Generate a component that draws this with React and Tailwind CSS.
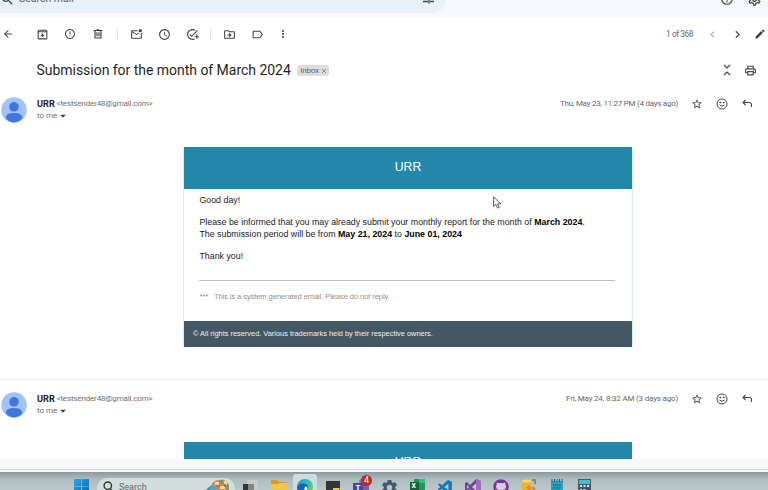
import React from 'react';
import {
  MdArrowBack, MdOutlineArchive, MdErrorOutline, MdOutlineMarkEmailUnread,
  MdAccessTime, MdOutlineAddTask, MdOutlineDriveFileMove, MdOutlineLabel, MdMoreVert,
  MdChevronLeft, MdChevronRight, MdEdit, MdOutlinePrint, MdStarBorder,
  MdSearch, MdHelpOutline, MdOutlineSettings, MdArrowDropDown, MdSettings,
} from 'react-icons/md';
import { VscVscode } from 'react-icons/vsc';
import { FaGithub } from 'react-icons/fa';

function Cell({ children, className = 'w-7' }) {
  return <div className={`flex shrink-0 items-center justify-center ${className}`}>{children}</div>;
}

function TuneIcon() {
  return (
    <svg width="13" height="12" viewBox="0 0 13 12" fill="none" stroke="currentColor" strokeWidth="1.3" className="mr-[11px] ml-auto">
      <path d="M6 4h6M1 4h3M4 2v4M1 8.500h5M8 8.500h4M7 6.500v4" />
    </svg>
  );
}

function TrashIcon() {
  return (
    <svg width="12" height="12" viewBox="0 0 24 24" fill="none" stroke="currentColor" strokeWidth="2.4">
      <path d="M3 5h18M9 3.500h6M6 5v15h12V5M10 8.500v8M14 8.500v8" />
    </svg>
  );
}

function CollapseIcon() {
  return (
    <svg width="8" height="12" viewBox="0 0 8 12" fill="none" stroke="currentColor" strokeWidth="1.2">
      <path d="m1 1 3 3 3-3M1 11l3-3 3 3" />
    </svg>
  );
}

function SmileIcon() {
  return (
    <svg width="12" height="12" viewBox="0 0 24 24" fill="none" stroke="currentColor" strokeWidth="2">
      <circle cx="12" cy="12" r="10" />
      <path d="M7 14q5 5 10 0" />
      <circle cx="8.500" cy="9" r="1" fill="currentColor" />
      <circle cx="15.500" cy="9" r="1" fill="currentColor" />
    </svg>
  );
}

function ReplyIcon() {
  return (
    <svg width="11" height="11" viewBox="0 0 22 22" fill="none" stroke="currentColor" strokeWidth="2.2">
      <path d="M7 4 2 9l5 5M2 9h13q4 0 4 4v5" />
    </svg>
  );
}

function TopBar() {
  return (
    <header className="h-[18px] shrink-0 overflow-hidden bg-[#f5f8fc]">
      <div className="-mt-[15px] flex h-7 items-center text-[#444746]">
        <div className="flex h-7 w-[446px] shrink-0 items-center rounded-r-[14px] bg-[#e9f1fb]">
          <MdSearch size={15} />
          <span className="ml-1 text-[10.5px] leading-none text-[#5f6368]">Search mail</span>
          <TuneIcon />
        </div>
        <MdHelpOutline size={14} className="ml-[274px]" />
        <MdOutlineSettings size={15} className="ml-[13px]" />
      </div>
    </header>
  );
}

function Toolbar() {
  return (
    <div className="flex h-8 shrink-0 items-center text-[#444546]">
      <Cell className="w-[15px]"><MdArrowBack size={12} /></Cell>
      <Cell className="ml-[13px] w-7"><MdOutlineArchive size={13} /></Cell>
      <Cell><MdErrorOutline size={12} /></Cell>
      <Cell><TrashIcon /></Cell>
      <div className="ml-[5px] h-[14px] w-px bg-[#e8e9ea]" />
      <Cell className="ml-1 w-7"><MdOutlineMarkEmailUnread size={13} /></Cell>
      <Cell><MdAccessTime size={13} /></Cell>
      <Cell><MdOutlineAddTask size={13} /></Cell>
      <div className="ml-1 h-[14px] w-px bg-[#e8e9ea]" />
      <Cell className="ml-1 w-7"><MdOutlineDriveFileMove size={13} /></Cell>
      <Cell><MdOutlineLabel size={13} /></Cell>
      <Cell className="w-6"><MdMoreVert size={12} /></Cell>
      <span className="ml-auto text-[8.2px] tracking-[-0.38px] whitespace-nowrap text-[#666]">1 of 368</span>
      <Cell className="ml-[7px] w-6"><MdChevronLeft size={13} className="text-[#aaa]" /></Cell>
      <Cell className="w-[26px]"><MdChevronRight size={15} /></Cell>
      <Cell className="-mr-px w-[19px]"><MdEdit size={12} /></Cell>
    </div>
  );
}

function Subject() {
  return (
    <div className="flex h-10 shrink-0 items-center pl-[36.5px] text-[#444546]">
      <h1 className="w-[255px] text-[14px] leading-none tracking-[-0.03px] whitespace-nowrap text-[#1f1f1f]">Submission for the month of March 2024</h1>
      <div className="ml-[5.5px] flex h-[11px] w-8 items-center justify-center gap-[3px] rounded-[3px] bg-[#dddddd] text-[8px] leading-none text-[#666]">
        <span className="pt-px tracking-[-0.2px]">Inbox</span>
        <svg width="4" height="4" viewBox="0 0 4 4" className="mt-px"><path d="m0 0 4 4M4 0 0 4" stroke="#666" strokeWidth="0.7" /></svg>
      </div>
      <Cell className="ml-auto w-[22px]"><CollapseIcon /></Cell>
      <Cell className="mr-[6px] w-6"><MdOutlinePrint size={13} /></Cell>
    </div>
  );
}

function Avatar() {
  return (
    <svg width="26" height="26" viewBox="0 0 26 26" className="ml-px shrink-0">
      <circle cx="13" cy="13" r="12.800" fill="#a0c3fb" />
      <circle cx="13" cy="9.800" r="4.800" fill="#4176dd" />
      <path d="M4.800 21q0-5 8.200-5t8.200 5q-3 4.400-8.200 4.400T4.800 21z" fill="#4176dd" />
    </svg>
  );
}

function MessageHead({ date, dateTracking }) {
  return (
    <div className="flex h-[26px] shrink-0 items-center">
      <Avatar />
      <div className="ml-[10px] flex h-[26px] flex-col text-[8px] text-[#707070]">
        <div className="flex h-[13px] items-center whitespace-nowrap">
          <b className="w-[19.5px] text-[9.2px] text-[#222]">URR</b>
          <span className="tracking-[-0.16px]">&lt;testsender48@gmail.com&gt;</span>
        </div>
        <div className="flex h-3 items-center">
          <span>to me</span>
          <MdArrowDropDown size={14} className="-ml-px text-[#444]" />
        </div>
      </div>
      <div className="mr-[7px] mb-auto ml-auto flex h-[13px] items-center text-[#444546]">
        <span className={`mr-[6px] text-[8px] whitespace-nowrap text-[#666] ${dateTracking}`}>{date}</span>
        <Cell className="w-[25px]"><MdStarBorder size={12} /></Cell>
        <Cell className="w-[25px]"><SmileIcon /></Cell>
        <Cell className="w-[27px]"><ReplyIcon /></Cell>
      </div>
    </div>
  );
}

function EmailBanner() {
  return (
    <div className="flex h-[42px] items-center justify-center bg-[#2387ac] pb-[2px] font-['Liberation_Sans',Arial,sans-serif] text-[12.2px] text-white">URR</div>
  );
}

function EmailCard() {
  return (
    <article className="ml-[183px] flex h-[200px] w-[450px] shrink-0 flex-col border-x border-[#d5efec] font-['Liberation_Sans',Arial,sans-serif] text-[#222]">
      <EmailBanner />
      <div className="flex h-[132px] flex-col px-[15.4px] text-[8.85px] leading-[12.5px] whitespace-nowrap">
        <p className="mt-[5px]">Good day!</p>
        <p className="mt-[9px]">
          Please be informed that you may already submit your monthly report for the month of <b className="text-black">March 2024</b>.<br />
          The submission period will be from <b className="text-black">May 21, 2024</b> to <b className="text-black">June 01, 2024</b>
        </p>
        <p className="mt-[9px]">Thank you!</p>
        <div className="mt-[18px] h-px w-[416px] bg-[#bbc1c1]" />
        <p className="mt-[10px] flex text-[7.5px] text-[#909090]">
          <span className="w-[14.5px]">***</span>
          <span className="tracking-[-0.07px]">This is a system generated email. Please do not reply.</span>
        </p>
      </div>
      <footer className="flex h-[26px] items-center bg-[#435863] pl-[9px] text-[7.4px] whitespace-nowrap text-[#edf1f3]">
        © All rights reserved. Various trademarks held by their respective owners.
      </footer>
    </article>
  );
}

function Cursor() {
  return (
    <svg width="9" height="13" viewBox="0 0 9 13" className="absolute top-[196px] left-[493px]">
      <path d="M.6.800v9.800l2.300-2.200 1.600 3.700 1.700-.8-1.600-3.500h3.100z" fill="#fff" stroke="#333" strokeWidth="0.800" />
    </svg>
  );
}

function StartIcon() {
  return (
    <svg width="15" height="15" viewBox="0 0 15 15">
      <defs>
        <linearGradient id="win" x2="1" y2="1"><stop stopColor="#2ba6df" /><stop offset="1" stopColor="#0867b9" /></linearGradient>
      </defs>
      <path d="M0 0h7.200v7.200H0zM7.800 0H15v7.200H7.800zM0 7.800h7.200V15H0zM7.800 7.800H15V15H7.800z" fill="url(#win)" />
    </svg>
  );
}

function TaskSearchIcon() {
  return (
    <svg width="10" height="12" viewBox="0 0 10 12" fill="none" stroke="#2e3538" strokeWidth="1.4" className="mt-[3px] ml-[6px]">
      <circle cx="4.800" cy="4.700" r="3.700" />
      <path d="m7.300 7.500 2.300 3" />
    </svg>
  );
}

function SearchArt() {
  return (
    <svg width="32" height="18" viewBox="0 0 32 18">
      <path d="M3 14q4-8 11-7l2 11H2z" fill="#2497be" />
      <path d="M8 9q5-3 9 2l-2 7H7z" fill="#48a9ca" />
      <path d="M9 7q3-5 8-5 6-2 10 5v11H16q2-8-7-11z" fill="#c28a60" />
      <path d="M13 4h4v3h-4zM22 3h3v4h-3zM18 8h5v3h-5z" fill="#efd6a4" />
      <path d="M18 2h3v4h-3zM24 7h3v4h-3z" fill="#799b5f" />
      <path d="M14 7h4v2h-4zM22 6h2v3h-2z" fill="#dc643b" />
      <path d="M1 12q5-3 7 6H1z" fill="#d6a97e" />
    </svg>
  );
}

function TaskViewIcon() {
  return (
    <svg width="16" height="16" viewBox="0 0 16 16"><path d="M4 0h11v12H4z" fill="#c9c8ca" /><path d="M0 4h11v10H0z" fill="#333436" /><path d="M5 4h6v6H5z" fill="#858486" /></svg>
  );
}

function FolderIcon() {
  return (
    <svg width="16" height="15" viewBox="0 0 16 15"><path d="M0 1h6l2 2h8v5H0z" fill="#d49b24" /><path d="M0 5h7l2-1h7v11H0z" fill="#f1c44b" /></svg>
  );
}

function EdgeIcon() {
  return (
    <svg width="16" height="16" viewBox="0 0 16 16">
      <defs>
        <linearGradient id="edge" x2="1" y2="0.600"><stop stopColor="#1992cd" /><stop offset="0.500" stopColor="#28b9c7" /><stop offset="1" stopColor="#68ce59" /></linearGradient>
      </defs>
      <circle cx="8" cy="8" r="8" fill="url(#edge)" />
      <path d="M0 9Q1 4 7 4.500q5 .5 3.500 5L8 9q-1 4 5 4-2 3-6 3-6-1-7-7z" fill="#1466b1" />
      <path d="M8 7.500q2-.5 2.500 2Q9 11 11 12q-5 1-3-4.500z" fill="#e5f3f8" />
    </svg>
  );
}

function NotesIcon() {
  return (
    <svg width="14" height="14" viewBox="0 0 14 14"><path d="M0 0h14v14H0z" fill="#343536" /><path d="M7 7h7l-5 7H7z" fill="#f0cb20" /></svg>
  );
}

function TeamsIcon() {
  return (
    <div className="relative h-4 w-4">
      <svg width="16" height="16" viewBox="0 0 16 16"><circle cx="9" cy="3" r="3" fill="#7379c9" /><path d="M5 5h11v11H5z" fill="#6268ba" /><path d="M0 4h10v11H0z" fill="#4248a0" /></svg>
      <span className="absolute top-[5px] left-[2.5px] text-[8px] leading-[8px] font-bold text-white">T</span>
      <span className="absolute -top-[4px] left-[8px] flex h-[11px] w-[11px] items-center justify-center rounded-full bg-[#ba2b24] text-[9px] leading-none text-white">4</span>
    </div>
  );
}

function ExcelIcon() {
  return (
    <div className="relative h-[15px] w-[15px]">
      <svg width="15" height="15" viewBox="0 0 15 15"><path d="M4 0h11v15H4z" fill="#20965b" /><path d="M9 0h6v4H9z" fill="#35bd78" /><path d="M0 3h9v9H0z" fill="#116238" /></svg>
      <span className="absolute top-[4px] left-[2px] text-[7px] leading-[7px] font-bold text-white">X</span>
    </div>
  );
}

function VisualStudioIcon() {
  return (
    <svg width="16" height="16" viewBox="0 0 16 16"><path d="m11 0 5 2v12l-5 2-6-6-3 3-2-1V4l2-1 3 3z" fill="#75449a" /><path d="m11 4.500-4 3.500 4 3.500zM2 6v4l2-2z" fill="#c2cdd0" /><path d="m11 0 5 2v12l-5 2z" fill="#9a70b8" /></svg>
  );
}

function DatabaseIcon() {
  return (
    <svg width="16" height="16" viewBox="0 0 16 16"><path d="M1 2q5-3 9 0v11H1z" fill="#e8b537" /><ellipse cx="5.500" cy="2" rx="4.500" ry="1.500" fill="#f4d872" /><path d="M11 1h3v4" fill="none" stroke="#568e51" strokeWidth="1.500" /><path d="m5 9 3-3 3 3-3 3zM10 9l2-2 3 3-2 2z" fill="#e68a31" /></svg>
  );
}

function NotepadIcon() {
  return (
    <svg width="14" height="16" viewBox="0 0 14 16"><path d="M1 2h12v14H1z" fill="#28a2bf" /><path d="M2 0v3M4.500 0v3M7 0v3M9.500 0v3M12 0v3" stroke="#176678" /><path d="M3 6h8M3 9h8M3 12h8" stroke="#126f89" /></svg>
  );
}

function CalculatorIcon() {
  return (
    <svg width="13" height="16" viewBox="0 0 13 16"><path d="M0 0h13v16H0z" fill="#4c5962" /><path d="M1 1h11v4H1z" fill="#43bbcf" /><path d="M2 6h2v2H2zM5.500 6h2v2h-2zM9 6h2v2H9zM2 10h2v2H2zM5.500 10h2v2h-2z" fill="#d7dddf" /><path d="M9 9h3v6H9z" fill="#194f94" /></svg>
  );
}

function Taskbar() {
  return (
    <footer className="flex h-[18px] shrink-0 items-start overflow-hidden bg-linear-to-b from-[#8b999d] via-[#aebcc0] via-40% to-[#bac8cc] pt-[7px]">
      <div className="ml-[74px] w-[15px] shrink-0"><StartIcon /></div>
      <div className="-mt-[1px] ml-2 flex h-5 w-[138px] shrink-0 items-start rounded-t-[10px] bg-[#d2dede]">
        <TaskSearchIcon />
        <span className="mt-1 ml-[6px] text-[9px] leading-[10px] text-[#626a6c]">Search</span>
        <div className="mr-[1px] ml-auto"><SearchArt /></div>
      </div>
      <Cell className="ml-[2px] w-7 pt-px"><TaskViewIcon /></Cell>
      <Cell><FolderIcon /></Cell>
      <div className="-mt-[5px] flex h-6 w-6 shrink-0 justify-center rounded-[3px] bg-[#d0dbdf] pt-[5px]"><EdgeIcon /></div>
      <Cell className="ml-[2px] w-7 pt-[2px]"><NotesIcon /></Cell>
      <Cell><TeamsIcon /></Cell>
      <Cell><MdSettings size={19} className="-mt-px text-[#45586a]" /></Cell>
      <Cell><ExcelIcon /></Cell>
      <Cell><VscVscode size={17} className="text-[#1478b5]" /></Cell>
      <Cell><VisualStudioIcon /></Cell>
      <Cell><div className="rounded-full bg-[#d9cddd]"><FaGithub size={16} className="text-[#783495]" /></div></Cell>
      <Cell><DatabaseIcon /></Cell>
      <Cell className="w-[27px]"><NotepadIcon /></Cell>
      <Cell><CalculatorIcon /></Cell>
    </footer>
  );
}

export default function App() {
  return (
    <div className="relative flex h-[490px] w-[768px] flex-col overflow-hidden bg-white font-[Roboto,'Liberation_Sans',sans-serif]">
      <TopBar />
      <main className="flex h-[441px] shrink-0 flex-col overflow-hidden">
        <Toolbar />
        <Subject />
        <div className="mt-[7px]"><MessageHead date="Thu, May 23, 11:27 PM (4 days ago)" dateTracking="tracking-[-0.26px]" /></div>
        <div className="mt-6"><EmailCard /></div>
        <div className="mt-8 h-px shrink-0 bg-[#ececee]" />
        <div className="mt-3"><MessageHead date="Fri, May 24, 8:32 AM (3 days ago)" dateTracking="tracking-[-0.18px]" /></div>
        <div className="mt-6 ml-[184px] w-[448px] shrink-0"><EmailBanner /></div>
      </main>
      <div className="h-[13px] shrink-0 bg-[#f6f8fc] pt-[10px]"><div className="h-px bg-[#d1d5d4]" /></div>
      <Taskbar />
      <Cursor />
    </div>
  );
}
